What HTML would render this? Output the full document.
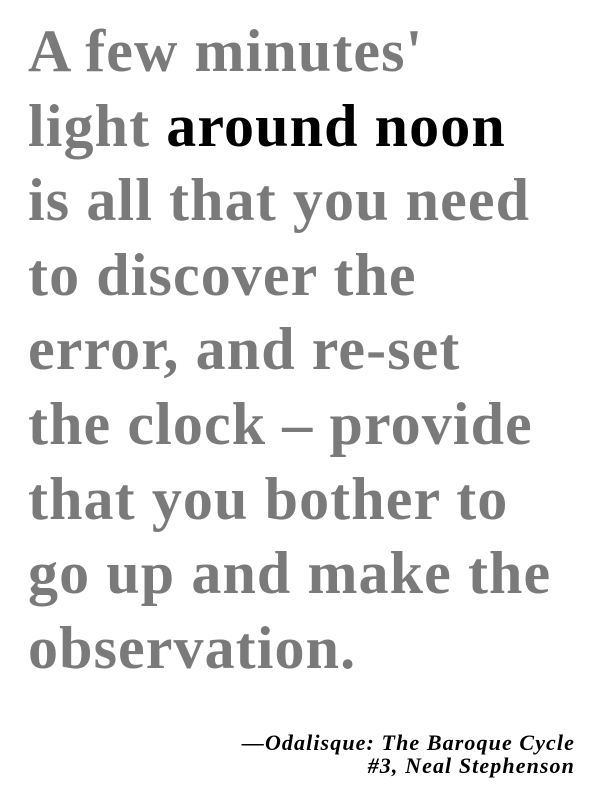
<!DOCTYPE html>
<html><head><meta charset="utf-8"><style>
html,body{margin:0;padding:0;background:#fff;width:600px;height:800px;overflow:hidden}
.q{position:absolute;left:28px;top:14px;width:570px;font-family:"Liberation Serif",serif;font-weight:bold;font-size:60px;line-height:74.6px;letter-spacing:1.1px;color:#7a7a7a;white-space:nowrap}
.q b{color:#000}
.a{position:absolute;right:25px;top:731px;text-align:right;font-family:"Liberation Serif",serif;font-style:italic;font-weight:bold;font-size:22px;line-height:23px;letter-spacing:1.1px;color:#000;white-space:nowrap}
</style></head><body>
<div class="q">A few minutes'<br>light <b>around noon</b><br>is all that you need<br>to discover the<br>error, and re-set<br>the clock – provide<br>that you bother to<br>go up and make the<br>observation.</div>
<div class="a">—Odalisque: The Baroque Cycle<br>#3, Neal Stephenson</div>
</body></html>
